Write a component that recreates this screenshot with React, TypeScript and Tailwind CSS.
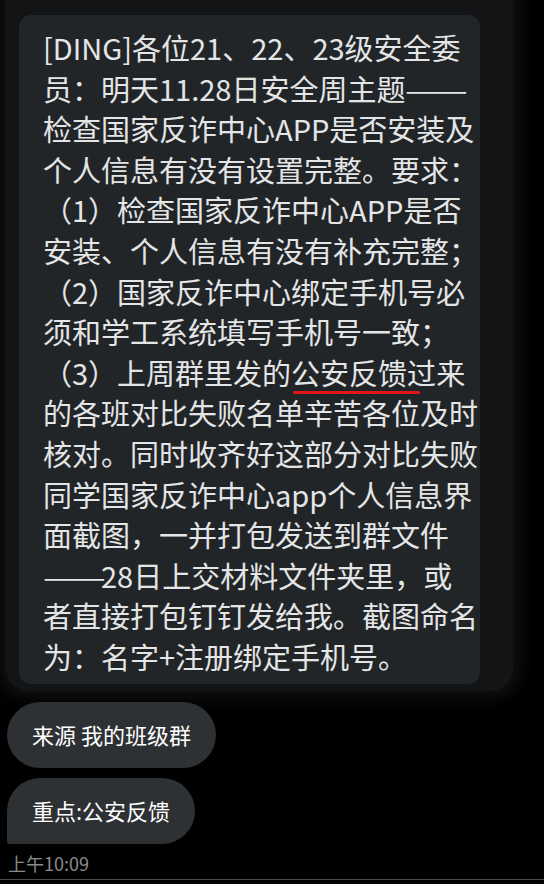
const Dash = () => (
  <span className="inline-block w-[58px]">
    <span className="inline-block origin-left scale-x-[1.29]">——</span>
  </span>
)

const lines: React.ReactNode[] = [
  "[DING]各位21、22、23级安全委",
  <>员：明天11.28日安全周主题<Dash /></>,
  "检查国家反诈中心APP是否安装及",
  "个人信息有没有设置完整。要求：",
  "（1）检查国家反诈中心APP是否",
  "安装、个人信息有没有补充完整；",
  "（2）国家反诈中心绑定手机号必",
  "须和学工系统填写手机号一致；",
  <>
    （3）上周群里发的
    <span className="relative">
      公安反馈过
      <span className="absolute left-[2px] right-[16px] bottom-[-1px] h-[3px] rounded-full bg-[#e0161b]" />
    </span>
    来
  </>,
  "的各班对比失败名单辛苦各位及时",
  "核对。同时收齐好这部分对比失败",
  "同学国家反诈中心app个人信息界",
  "面截图，一并打包发送到群文件",
  <><Dash />28日上交材料文件夹里，或</>,
  "者直接打包钉钉发给我。截图命名",
  "为：名字+注册绑定手机号。",
]

const font = { fontFamily: '"Noto Sans CJK SC", "Liberation Sans", sans-serif' }

export default function App() {
  return (
    <div className="w-[544px] h-[884px] bg-black overflow-hidden relative" style={font}>
      {/* quoted message panel */}
      <div className="ml-[6px] mr-[31px] -mt-[10px] pt-[25px] pb-[7px] pl-[13px] pr-[33px] rounded-b-[22px] bg-[#131416] shadow-[0_0_18px_6px_rgba(40,42,46,0.45)]">
        <div className="rounded-[12px] bg-[#222528] pl-[24px] pt-[12px] pb-[7px] text-[#e4e5e6] text-[29px] leading-[40.6px] whitespace-nowrap">
          {lines.map((l, i) => (
            <div key={i}>{l}</div>
          ))}
        </div>
      </div>

      {/* tags */}
      <div className="flex flex-col items-start gap-[10px] mt-[11px] pl-[7px]">
        <div className="h-[66px] px-[25px] flex items-center rounded-[33px] bg-[#2e3134] text-white text-[22px]">
          来源 我的班级群
        </div>
        <div className="h-[66px] px-[25px] flex items-center rounded-[33px] rounded-bl-[2px] bg-[#2e3134] text-white text-[22px]">
          重点:公安反馈
        </div>
      </div>

      <div className="pl-[8px] mt-[8px] text-[18px] leading-[22px] text-[#8a8b8c]">上午10:09</div>
      <div className="absolute left-0 right-0 top-[879px] h-[1px] bg-[#4a4b4c]" />
    </div>
  )
}
